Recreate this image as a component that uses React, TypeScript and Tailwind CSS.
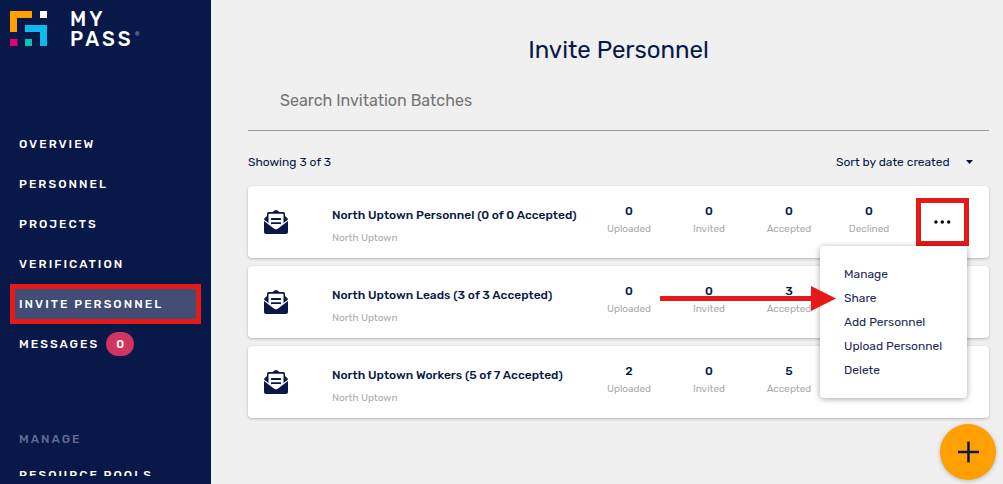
import React from 'react';

interface Batch {
  name: string;
  accepted: number;
  total: number;
  project: string;
  stats: { label: string; value: number }[];
}

const createStats = (uploaded: number, invited: number, accepted: number, declined: number) => [
  { label: 'Uploaded', value: uploaded },
  { label: 'Invited', value: invited },
  { label: 'Accepted', value: accepted },
  { label: 'Declined', value: declined },
];

const batches: Batch[] = [
  { name: 'North Uptown Personnel', accepted: 0, total: 0, project: 'North Uptown', stats: createStats(0, 0, 0, 0) },
  { name: 'North Uptown Leads', accepted: 3, total: 3, project: 'North Uptown', stats: createStats(0, 0, 3, 0) },
  { name: 'North Uptown Workers', accepted: 5, total: 7, project: 'North Uptown', stats: createStats(2, 0, 5, 0) },
];

const navItems = ['Overview', 'Personnel', 'Projects', 'Verification', 'Invite Personnel', 'Messages'];
const menuItems = ['Manage', 'Share', 'Add Personnel', 'Upload Personnel', 'Delete'];

const Logo: React.FC = () => (
  <div className="flex items-start pl-[10px] pt-[9px]">
    <svg className="mt-[2px] h-[35px] w-[37px] shrink-0" viewBox="0 0 37 35" aria-hidden="true">
      <path d="M0 0h22v7H7v14H0z" fill="#ffa000" />
      <path d="M30 0h7v7h-7z" fill="#fff" />
      <path d="M15 14h22v21h-7V21H15z" fill="#0cb9ec" />
      <path d="M0 28h7.500v7H0z" fill="#e5006d" />
      <path d="M15 28h7v7h-7z" fill="#00c7b1" />
    </svg>
    <div className="ml-[23px] text-xl font-medium uppercase leading-5 tracking-[3px]">
      My
      <br />
      Pass
    </div>
    <span className="ml-px mt-[22px] text-[6px] leading-none text-slate-400">®</span>
  </div>
);

const EnvelopeIcon: React.FC = () => (
  <svg className="h-6 w-6 shrink-0" viewBox="0 0 24 24" fill="#081848" aria-hidden="true">
    <path d="M0 11l9.800 7.600q2.200 1.600 4.400 0L24 11v11a2 2 0 0 1-2 2H2a2 2 0 0 1-2-2z" />
    <path d="M0 9.500Q0 8.700.8 8L3 6V3.800Q3 2 4.800 2H8.500l2-1.500q1.500-1 3 0l2 1.500h3.700Q21 2 21 3.800V6l2.200 2q.8.700.8 1.500L19.500 13V4.500q0-.7-.7-.7H5.200q-.7 0-.7.700V13z" />
    <path d="M7.500 8h9q.6 0 .6.600v.7q0 .6-.6.600h-9q-.6 0-.6-.6v-.7q0-.6.6-.6zM7.500 12.200h9q.6 0 .6.600v.7q0 .6-.6.600h-9q-.6 0-.6-.6v-.7q0-.6.6-.6z" />
  </svg>
);

const Sidebar: React.FC = () => (
  <aside className="flex h-screen w-[211px] shrink-0 flex-col bg-[#081848] pb-2 text-white">
    <Logo />
    <nav className="mt-[75px] min-h-0 flex-1 overflow-hidden px-[10px] text-xs font-medium uppercase tracking-[2px]">
      {navItems.map((item) => {
        const active = item === 'Invite Personnel';
        return (
          <a
            key={item}
            href="#"
            aria-current={active ? 'page' : undefined}
            className={`flex h-10 items-center ${active ? 'border-[5px] border-[#e61919] bg-[#434c75] pl-1' : 'pl-[9px]'}`}
          >
            {item}
            {item === 'Messages' && (
              <span className="ml-[7px] flex h-6 w-7 items-center justify-center rounded-full bg-[#d23462] pl-[2px]">0</span>
            )}
          </a>
        );
      })}
      <h2 className="mt-[55px] flex h-10 items-center pl-[9px] text-[#636c94]">Manage</h2>
      <a href="#" className="flex h-8 items-center pl-[9px]">Resource Pools</a>
    </nav>
  </aside>
);

const ActionMenu: React.FC = () => (
  <div className="absolute right-[2px] top-full z-10 w-[147px] rounded bg-white py-4 shadow-[0_1px_6px_rgba(0,0,0,0.35)]">
    <ul>
      {menuItems.map((item) => (
        <li key={item}>
          <button type="button" className="block h-6 w-full whitespace-nowrap pl-6 text-left text-xs text-[#1d2a58]">
            {item}
          </button>
        </li>
      ))}
    </ul>
    <svg className="pointer-events-none absolute -left-40 top-10 h-[25px] w-44" viewBox="0 0 176 25" aria-hidden="true">
      <path d="M0 10h151V0l25 12.500L151 25V15H0z" fill="#e61919" />
    </svg>
  </div>
);

const BatchCard: React.FC<{ batch: Batch; menuOpen?: boolean }> = ({ batch, menuOpen = false }) => (
  <li className="flex h-[72px] items-center rounded bg-white pl-4 pr-5 shadow-[0_1px_3px_rgba(0,0,0,0.25)]">
    <EnvelopeIcon />
    <div className="ml-11 min-w-0 flex-1 pt-1">
      <h3 className="whitespace-nowrap text-xs font-medium leading-6">
        {batch.name} ({batch.accepted} of {batch.total} Accepted)
      </h3>
      <p className="mt-[3px] text-[10px] leading-4 text-[#aaa]">{batch.project}</p>
    </div>
    <dl className="flex shrink-0">
      {batch.stats.map((stat) => (
        <div key={stat.label} className="flex w-20 flex-col-reverse items-center pb-[6px]">
          <dt className="text-[10px] leading-4 text-[#aaa]">{stat.label}</dt>
          <dd className="text-xs font-medium leading-5">{stat.value}</dd>
        </div>
      ))}
    </dl>
    <div className="relative ml-[7px] shrink-0">
      <button
        type="button"
        aria-label={`Actions for ${batch.name}`}
        aria-expanded={menuOpen}
        className={`flex h-12 w-[53px] items-center justify-center ${menuOpen ? 'border-[5px] border-[#e61919]' : ''}`}
      >
        <svg className="h-1 w-[18px]" viewBox="0 0 18 4" fill="#000" aria-hidden="true">
          <circle cx="1.900" cy="2" r="1.700" />
          <circle cx="8.300" cy="2" r="1.700" />
          <circle cx="14.700" cy="2" r="1.700" />
        </svg>
      </button>
      {menuOpen && <ActionMenu />}
    </div>
  </li>
);

export default function App() {
  return (
    <div className="flex min-h-screen bg-[#f0f0f0] font-['Rubik','Inter',sans-serif] text-[#081848]">
      <Sidebar />
      <main className="min-w-0 flex-1 pl-[37px] pr-[14px] pt-[34px]">
        <h1 className="text-center text-2xl leading-8">Invite Personnel</h1>
        <input
          type="search"
          aria-label="Search Invitation Batches"
          placeholder="Search Invitation Batches"
          className="mt-1 block h-[61px] w-full border-b border-[#999] px-8 text-base placeholder:text-[#757575] focus:outline-none"
        />
        <div className="flex h-[55px] items-center justify-between pt-[7px] text-xs">
          <p>Showing {batches.length} of {batches.length}</p>
          <div className="relative">
            <select aria-label="Sort batches" className="appearance-none bg-transparent pr-[39px] focus:outline-none">
              <option>Sort by date created</option>
            </select>
            <svg className="pointer-events-none absolute right-4 top-1/2 h-1 w-[7px] -translate-y-1/2" viewBox="0 0 7 4" aria-hidden="true">
              <path d="M0 0h7L3.500 4z" fill="#081848" />
            </svg>
          </div>
        </div>
        <ul className="flex flex-col gap-2">
          {batches.map((batch, index) => (
            <BatchCard key={batch.name} batch={batch} menuOpen={index === 0} />
          ))}
        </ul>
      </main>
      <button
        type="button"
        aria-label="Invite personnel"
        className="fixed bottom-1 right-[7px] flex h-14 w-14 items-center justify-center rounded-full bg-[#ffa000] shadow-[0_1px_4px_rgba(0,0,0,0.25)]"
      >
        <svg className="h-[22px] w-[22px]" viewBox="0 0 22 22" aria-hidden="true">
          <path d="M11.500 0.500v21M1 11h21" stroke="#081848" strokeWidth="2.500" />
        </svg>
      </button>
    </div>
  );
}
